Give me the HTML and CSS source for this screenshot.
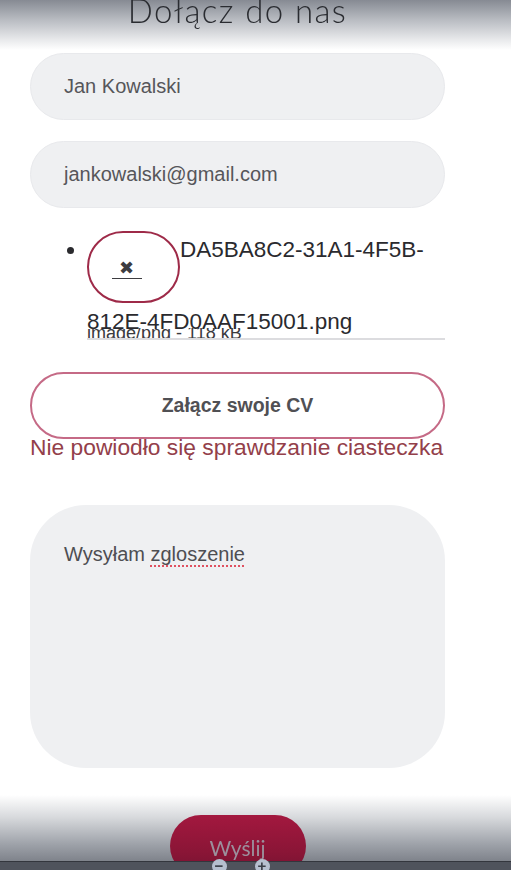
FILE: index.html
```html
<!DOCTYPE html>
<html lang="pl">
<head>
<meta charset="utf-8">
<title>Dołącz do nas</title>
<link rel="stylesheet" href="styles.css">
</head>
<body>
<header class="topbar">
  <h1 class="title">Dołącz do nas</h1>
</header>

<main class="form">
  <div class="field">Jan Kowalski</div>
  <div class="field field-second">jankowalski@gmail.com</div>

  <ul class="files">
    <li class="file">
      <button class="remove" type="button"><span class="x">✖</span></button><span class="name">DA5BA8C2-31A1-4F5B-<wbr>812E-4FD0AAF15001.png</span>
      <div class="meta">image/png - 118 kB</div>
    </li>
  </ul>

  <button class="attach" type="button">Załącz swoje CV</button>
  <p class="error">Nie powiodło się sprawdzanie ciasteczka</p>

  <div class="message">Wysyłam <span class="spell">zgloszenie</span></div>
</main>

<footer class="bottombar">
  <button class="send" type="button">Wyślij</button>
  <div class="zoombar">
    <span class="zbtn">−</span>
    <span class="zbtn">+</span>
  </div>
</footer>
</body>
</html>
```

FILE: styles.css
```css
* { box-sizing: border-box; }

html, body {
  margin: 0;
  padding: 0;
  height: 870px;
  overflow: hidden;
  background: #ffffff;
  font-family: "Liberation Sans", Arial, sans-serif;
  color: #555558;
}

.topbar {
  position: fixed;
  top: 0;
  left: 0;
  right: 0;
  height: 50px;
  background: linear-gradient(to bottom, #868a93 0%, #b9bcc2 40%, #e9eaec 80%, #ffffff 100%);
  z-index: 5;
}

.title {
  margin: 0;
  text-align: center;
  font-family: Lato, "Noto Sans", sans-serif;
  font-weight: 300;
  font-size: 33px;
  letter-spacing: 1.4px;
  line-height: 1;
  color: #2a2c31;
  position: relative;
  top: -6px;
  left: -18px;
}

.form {
  width: 415px;
  margin-left: 30px;
  padding-top: 53px;
}

.field {
  height: 67px;
  border-radius: 34px;
  background: #eff0f2;
  border: 1px solid #e8e9ec;
  padding-left: 33px;
  display: flex;
  align-items: center;
  font-size: 20px;
  color: #56565a;
}

.field-second { margin-top: 21px; }

.files {
  margin: 23px 0 0 0;
  padding-left: 57px;
  list-style: disc;
  font-size: 22.5px;
  color: #2a2a2e;
}

.file {
  line-height: 38px;
}

.remove {
  display: inline-block;
  vertical-align: top;
  width: 93px;
  height: 72px;
  margin: 0;
  padding: 0 14px 0 0;
  border: 2px solid #9e2a48;
  border-radius: 38px;
  background: #ffffff;
  cursor: pointer;
}

.x {
  display: inline-block;
  font-size: 18px;
  line-height: 18px;
  color: #3c3c40;
  width: 30px;
  border-bottom: 1.5px solid #3c3c40;
  padding-bottom: 1px;
  position: relative;
  top: 2px;
}

.meta {
  height: 12px;
  margin-top: -13px;
  overflow: hidden;
  font-size: 18px;
  line-height: 10px;
  color: #3a3a3e;
  border-bottom: 2px solid #dcdcdf;
}

.attach {
  display: block;
  width: 415px;
  height: 67px;
  margin-top: 32px;
  border: 2px solid #c56a86;
  border-radius: 34px;
  background: #ffffff;
  font-family: "Liberation Sans", Arial, sans-serif;
  font-weight: bold;
  font-size: 19.5px;
  color: #505054;
}

.error {
  margin: -5px 0 0 0;
  font-size: 22.8px;
  line-height: 26px;
  color: #93404a;
  white-space: nowrap;
}

.message {
  margin-top: 45px;
  height: 263px;
  border-radius: 56px;
  background: #eff0f2;
  padding: 38px 0 0 34px;
  font-size: 20px;
  color: #4e4e52;
}

.spell {
  text-decoration: underline dotted #e05060;
  text-decoration-thickness: 2px;
  text-underline-offset: 4px;
}

.bottombar {
  position: fixed;
  left: 0;
  right: 0;
  bottom: 0;
  height: 75px;
  background: linear-gradient(to bottom, #ffffff 0%, #d7d9dc 30%, #9fa3aa 65%, #6e727b 100%);
  display: flex;
  justify-content: center;
  padding-right: 36px;
  z-index: 5;
}

.send {
  margin-top: 20px;
  width: 136px;
  height: 62px;
  border: none;
  border-radius: 34px;
  background: linear-gradient(to bottom, #a3183f 0%, #8a1536 60%, #721230 100%);
  font-family: Lato, "Noto Sans", sans-serif;
  font-size: 21px;
  color: #9c8f9c;
  padding: 0 0 17px 0;
  display: flex;
  align-items: flex-end;
  justify-content: center;
}

.zoombar {
  position: absolute;
  left: 0;
  right: 0;
  bottom: 0;
  height: 9px;
  background: #4f535c;
  border-top: 1px solid #33363d;
  display: flex;
  justify-content: center;
  gap: 28px;
  padding-right: 30px;
}

.zbtn {
  width: 15px;
  height: 15px;
  margin-top: -3px;
  border-radius: 50%;
  background: #b6bfcf;
  color: #3a3e48;
  font-size: 15px;
  font-weight: bold;
  line-height: 13px;
  text-align: center;
}
```
